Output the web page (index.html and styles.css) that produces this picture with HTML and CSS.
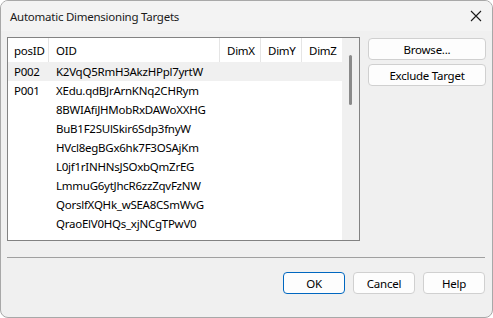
FILE: index.html
```html
<!DOCTYPE html>
<html lang="en">
<head>
    <meta charset="UTF-8">
    <title>Automatic Dimensioning Targets</title>
    <link rel="stylesheet" href="styles.css">
</head>
<body>
    <div class="window">
        <div class="title-bar">
            <span class="title">Automatic Dimensioning Targets</span>
            <svg class="close" width="12" height="12" viewBox="0 0 12 12">
                <path d="M1 1 L11 11 M11 1 L1 11" stroke="#1a1a1a" stroke-width="1.1" fill="none"/>
            </svg>
        </div>

        <div class="main">
            <div class="list-box">
                <div class="list-content">
                    <div class="list-header">
                        <div class="col col-pos">posID</div>
                        <div class="col col-oid">OID</div>
                        <div class="col col-dim">DimX</div>
                        <div class="col col-dim">DimY</div>
                        <div class="col col-dimz">DimZ</div>
                    </div>
                    <div class="row selected"><div class="col col-pos">P002</div><div class="col col-oid">K2VqQ5RmH3AkzHPpl7yrtW</div></div>
                    <div class="row"><div class="col col-pos">P001</div><div class="col col-oid">XEdu.qdBJrArnKNq2CHRym</div></div>
                    <div class="row"><div class="col col-pos"></div><div class="col col-oid">8BWIAfiJHMobRxDAWoXXHG</div></div>
                    <div class="row"><div class="col col-pos"></div><div class="col col-oid">BuB1F2SUlSkir6Sdp3fnyW</div></div>
                    <div class="row"><div class="col col-pos"></div><div class="col col-oid">HVcl8egBGx6hk7F3OSAjKm</div></div>
                    <div class="row"><div class="col col-pos"></div><div class="col col-oid">L0jf1rINHNsJSOxbQmZrEG</div></div>
                    <div class="row"><div class="col col-pos"></div><div class="col col-oid">LmmuG6ytJhcR6zzZqvFzNW</div></div>
                    <div class="row"><div class="col col-pos"></div><div class="col col-oid">QorslfXQHk_wSEA8CSmWvG</div></div>
                    <div class="row"><div class="col col-pos"></div><div class="col col-oid">QraoElV0HQs_xjNCgTPwV0</div></div>
                </div>
                <div class="scrollbar">
                    <div class="thumb"></div>
                </div>
            </div>

            <div class="side-buttons">
                <button class="btn">Browse...</button>
                <button class="btn">Exclude Target</button>
            </div>
        </div>

        <div class="separator"></div>

        <div class="footer">
            <button class="btn btn-small default">OK</button>
            <button class="btn btn-small">Cancel</button>
            <button class="btn btn-small">Help</button>
        </div>
    </div>
</body>
</html>
```

FILE: styles.css
```css
body {
    margin: 0;
    background: #ffffff;
    font-family: "Noto Sans", "Open Sans", sans-serif;
    font-size: 11.5px;
    letter-spacing: -0.25px;
    color: #000;
}

.window {
    width: 493px;
    height: 318px;
    box-sizing: border-box;
    border: 1px solid #a8a8a8;
    border-radius: 8px;
    background: #f0f0f0;
    overflow: hidden;
}

.title-bar {
    height: 30px;
    display: flex;
    align-items: center;
    justify-content: space-between;
    padding: 0 9px 0 9px;
    background: #f3f3f3;
}

.title {
    color: #1a1a1a;
}

.close {
    margin-right: 1px;
}

.main {
    display: flex;
    gap: 8px;
    padding: 6px 7px 0 6px;
}

.list-box {
    width: 353px;
    height: 204px;
    box-sizing: border-box;
    border: 1px solid #828282;
    background: #fff;
    display: flex;
}

.list-content {
    flex: 1;
}

.list-header {
    display: flex;
    height: 24px;
    align-items: stretch;
}

.list-header .col {
    border-right: 1px solid #e5e5e5;
    display: flex;
    align-items: center;
}

.list-header .col-dimz {
    border-right: none;
}

.col {
    box-sizing: border-box;
    padding-left: 6px;
    white-space: nowrap;
}

.col-pos { width: 41px; }
.col-oid { width: 171px; padding-left: 7px; }
.col-dim { width: 41px; padding-left: 7px; }
.col-dimz { width: 40px; padding-left: 7px; }

.row {
    display: flex;
    height: 19px;
    align-items: center;
}

.row.selected {
    background: #f0f0f0;
}

.scrollbar {
    width: 17px;
    background: #f0f0f0;
    position: relative;
}

.thumb {
    position: absolute;
    left: 7px;
    top: 17px;
    width: 3px;
    height: 50px;
    border-radius: 2px;
    background: #8a8a8a;
}

.side-buttons {
    display: flex;
    flex-direction: column;
    gap: 4px;
    padding-top: 1px;
}

.btn {
    width: 118px;
    height: 22px;
    box-sizing: border-box;
    border: 1px solid #d0d0d0;
    border-radius: 4px;
    background: #fdfdfd;
    font-family: inherit;
    font-size: 11.5px;
    letter-spacing: -0.25px;
    color: #000;
    padding: 0;
}

.separator {
    height: 1px;
    background: #a0a0a0;
    margin: 16px 7px 0 6px;
}

.footer {
    display: flex;
    justify-content: flex-end;
    gap: 8px;
    padding: 14px 7px 0 0;
}

.btn-small {
    width: 62px;
}

.btn.default {
    border-color: #0067c0;
}
```
